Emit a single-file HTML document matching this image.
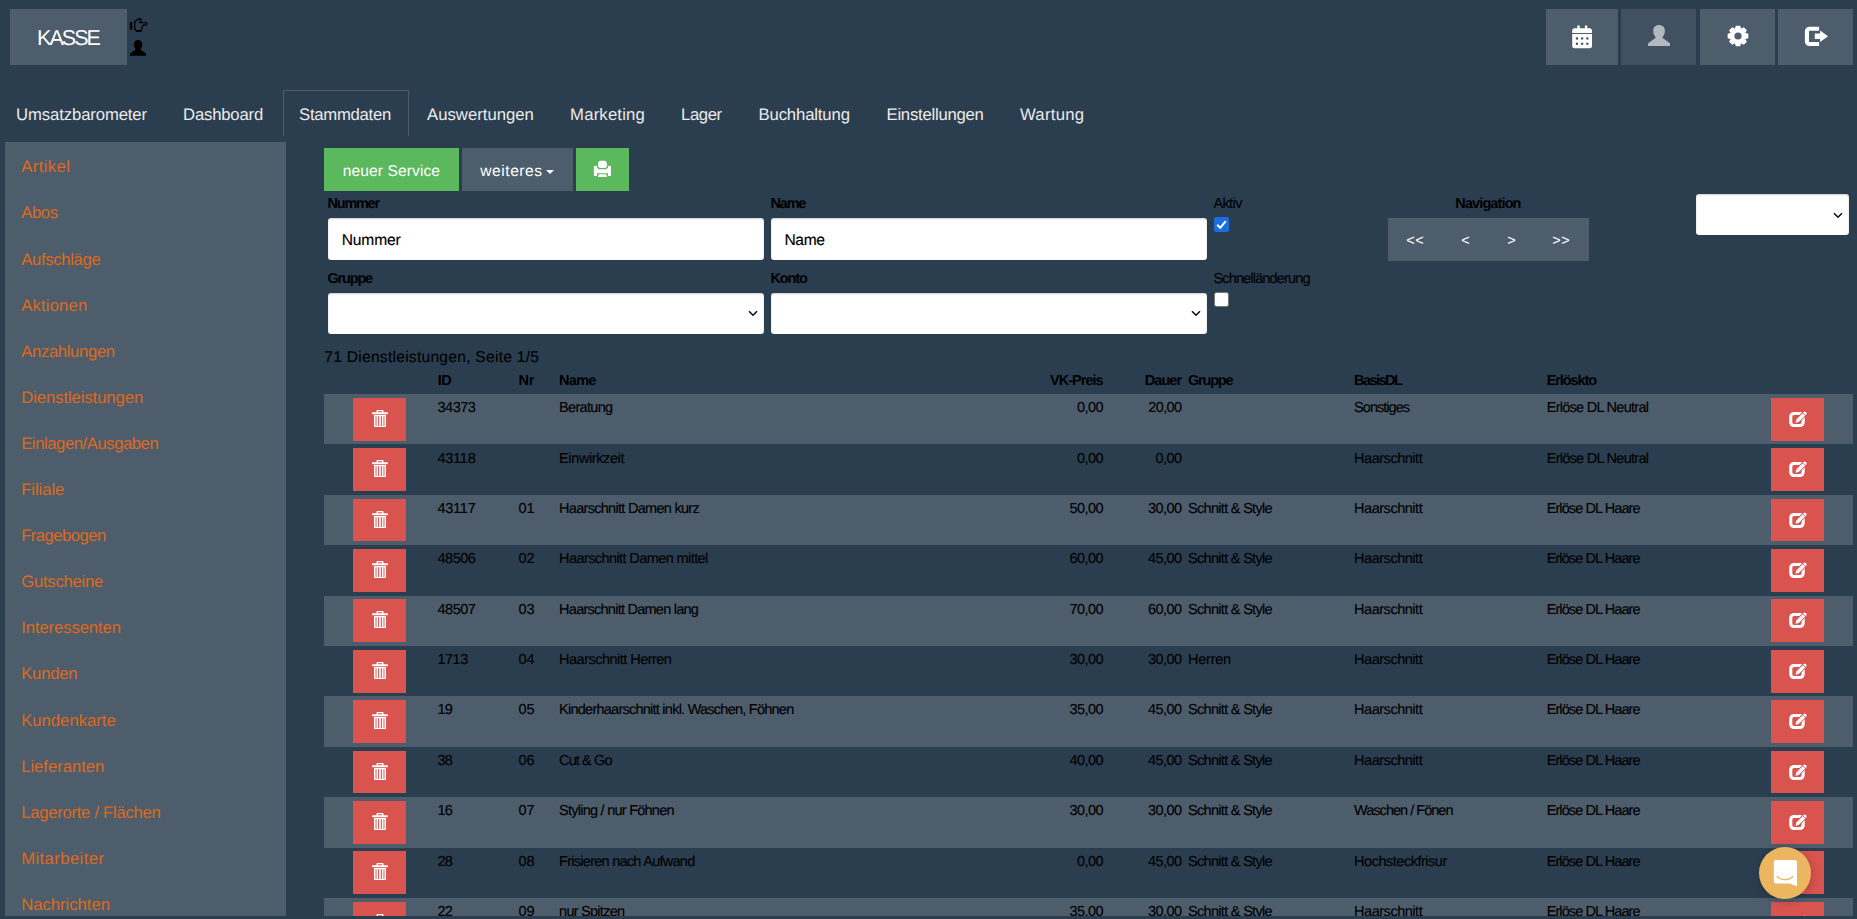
<!DOCTYPE html>
<html lang="de"><head><meta charset="utf-8"><title>Stammdaten - Dienstleistungen</title>
<style>
html,body{margin:0;padding:0}
body{width:1857px;height:919px;overflow:hidden;background:#2b3e50;font-family:'Liberation Sans',sans-serif;color:#000;position:relative;text-rendering:geometricPrecision}
.t{position:absolute;white-space:pre;display:block}
.k{-webkit-text-stroke:.15px}
.abs{position:absolute}
.btn{position:absolute;box-sizing:border-box}
.kasse{left:10px;top:9px;width:117px;height:56px;background:#4e5d6c}
.tb{top:9px;height:56px;background:#4e5d6c}
.tb svg{position:absolute}
.tab{position:absolute;top:90px;height:46px;box-sizing:border-box;border:1px solid transparent;border-bottom:0}
.tab.active{border-color:#4e5d6c}
.sidebar{position:absolute;left:5px;top:142px;width:281px;height:774px;background:#4e5d6c}
.row{position:absolute;left:324px;width:1529px;height:50.4px}
.row.odd{background:#4e5d6c}
.del,.edt{position:absolute;top:3.8px;height:42.86px;width:53px;background:#d9534f}
.del{left:29px}.edt{left:1447px}
.del svg{position:absolute;left:19px;top:12px}.edt svg{position:absolute;left:0;top:0}
.inp{position:absolute;box-sizing:border-box;background:#fff;border:0;border-radius:3px;box-shadow:inset 0 1px 2px rgba(0,0,0,.2)}
.chev{position:absolute}
.green{background:#5cb85c}.grey{background:#4e5d6c}
.foot{position:absolute;left:0;top:916px;width:1857px;height:4px;background:#2b3e50;z-index:5}
</style></head><body>
<div class="btn kasse"></div><svg class="abs" style="left:129px;top:17px" width="19" height="16" viewBox="129 17 19 16"><path fill="#000" d="M129.800 22h2.500v7.700h-2.500z"/><path fill="#000" d="M136.300 30.200h5.100l-.5 1.700h-4.100z"/><path fill="none" stroke="#000" stroke-width="1.350" stroke-linejoin="round" d="M134.700 29V21.600L139.600 18.300L141.300 20.200L139.300 22.600H145.600A1.250 1.250 0 0 1 145.600 25.100H142.900L140.900 31.200H136.800Z"/></svg><svg class="abs" style="left:129.900px;top:40px" width="16.100" height="15.800" viewBox="0 0 22 21" preserveAspectRatio="none"><path fill="#000" d="M11 0C14.500 0 16.800 2.300 16.800 5.600C16.800 8.500 15.800 10.500 14.600 11.600V13L21.300 17.500C22 18.100 22 19 22 21H0C0 19 0 18.100.7 17.500L7.400 13V11.600C6.200 10.500 5.200 8.500 5.200 5.600C5.200 2.300 7.500 0 11 0Z"/></svg><div class="btn tb" style="left:1546px;width:72px;background:#4e5d6c"><svg style="left:0;top:0" width="72" height="56" viewBox="1546 9 72 56"><path fill="#fff" d="M1577.300 25.600h2.400v2.600h5.200v-2.600h2.400v2.600h2.200a2.500 2.500 0 0 1 2.500 2.500v2.400h-19.800v-2.400a2.500 2.500 0 0 1 2.500-2.500h2.600zM1572.200 34.100h19.800v11.600a2.500 2.500 0 0 1-2.500 2.500h-14.800a2.500 2.500 0 0 1-2.500-2.500z"/><g fill="#3b4a63"><rect x="1575.900" y="37.400" width="2.100" height="2.100"/><rect x="1581.100" y="37.400" width="2.100" height="2.100"/><rect x="1586.300" y="37.400" width="2.100" height="2.100"/><rect x="1575.900" y="42.700" width="2.100" height="2.100"/><rect x="1581.100" y="42.700" width="2.100" height="2.100"/><rect x="1586.300" y="42.700" width="2.100" height="2.100"/></g></svg></div>
<div class="btn tb" style="left:1621px;width:75px;background:#425162"><svg style="left:26.900px;top:15.800px" width="22.100" height="21.200" viewBox="0 0 22 21" preserveAspectRatio="none"><path fill="#b3b9c0" d="M11 0C14.500 0 16.800 2.300 16.800 5.600C16.800 8.500 15.800 10.500 14.600 11.600V13L21.300 17.500C22 18.100 22 19 22 21H0C0 19 0 18.100.7 17.500L7.400 13V11.600C6.200 10.500 5.200 8.500 5.200 5.600C5.200 2.300 7.500 0 11 0Z"/></svg></div>
<div class="btn tb" style="left:1700px;width:75px;background:#4e5d6c"><svg style="left:26.700px;top:15.900px" width="22" height="22" viewBox="-11 -11 22 22"><g fill="#fff"><circle r="7.600"/><path d="M-3.200 -7L-2.200 -10.350H2.200L3.200 -7Z" transform="rotate(0)"/><path d="M-3.200 -7L-2.200 -10.350H2.200L3.200 -7Z" transform="rotate(45)"/><path d="M-3.200 -7L-2.200 -10.350H2.200L3.200 -7Z" transform="rotate(90)"/><path d="M-3.200 -7L-2.200 -10.350H2.200L3.200 -7Z" transform="rotate(135)"/><path d="M-3.200 -7L-2.200 -10.350H2.200L3.200 -7Z" transform="rotate(180)"/><path d="M-3.200 -7L-2.200 -10.350H2.200L3.200 -7Z" transform="rotate(225)"/><path d="M-3.200 -7L-2.200 -10.350H2.200L3.200 -7Z" transform="rotate(270)"/><path d="M-3.200 -7L-2.200 -10.350H2.200L3.200 -7Z" transform="rotate(315)"/></g><circle r="3.600" fill="#4e5d6c"/></svg></div>
<div class="btn tb" style="left:1778px;width:75px;background:#4e5d6c"><svg style="left:0;top:0" width="75" height="56" viewBox="0 0 75 56"><path fill="#fff" d="M41.100 17.700H31.400a4.500 4.500 0 0 0-4.500 4.500V32.600a4.500 4.500 0 0 0 4.500 4.500H41.100V33H31V21.800H41.100ZM36.800 24.500H42.100V21.500L50 27.300L42.100 33.100V30H36.800Z"/></svg></div>
<div class="tab" style="left:0px;width:165px"></div><div class="tab" style="left:167px;width:114px"></div><div class="tab active" style="left:283px;width:126px"></div><div class="tab" style="left:411px;width:141px"></div><div class="tab" style="left:554px;width:109px"></div><div class="tab" style="left:665px;width:75px"></div><div class="tab" style="left:742px;width:126px"></div><div class="tab" style="left:870px;width:132px"></div><div class="tab" style="left:1004px;width:97px"></div>
<div class="sidebar"></div>
<div class="btn green" style="left:324px;top:148px;width:135px;height:42.86px"></div><div class="btn grey" style="left:462px;top:148px;width:111px;height:42.86px"></div><div class="btn green" style="left:576px;top:148px;width:53px;height:43px"><svg class="abs" style="left:0;top:0" width="53" height="43" viewBox="0 0 53 43"><path fill="#fff" d="M17.900 17.900h17v10.100h-17z"/><path fill="#5cb85c" d="M21 17.500h11v2l-1.700 1.700h-7.600l-1.700-1.700zM21 25.300h11v3h-11z"/><path fill="#fff" d="M23.800 12.800h5.400l1.700 1.700v3.900l-1.700 1.700h-5.400l-1.700-1.700v-3.900zM22.900 26.200h7.200l1.100 2.900h-9.400z"/></svg></div><div class="abs" style="left:546.300px;top:169.800px;width:0;height:0;border-left:4px solid transparent;border-right:4px solid transparent;border-top:4.500px solid #fff"></div>
<div class="inp" style="left:328px;top:218px;width:436px;height:42px"></div><div class="inp" style="left:771px;top:218px;width:436px;height:42px"></div><div class="inp" style="left:328px;top:293px;width:436px;height:41px"></div><div class="inp" style="left:771px;top:293px;width:436px;height:41px"></div><div class="inp" style="left:1696px;top:194px;width:153px;height:41px"></div><svg class="chev" style="left:748px;top:310px" width="10" height="7" viewBox="0 0 10 7"><path fill="none" stroke="#111" stroke-width="1.600" d="M1 1.200l4 4 4-4"/></svg><svg class="chev" style="left:1191px;top:310px" width="10" height="7" viewBox="0 0 10 7"><path fill="none" stroke="#111" stroke-width="1.600" d="M1 1.200l4 4 4-4"/></svg><svg class="chev" style="left:1833px;top:212px" width="10" height="7" viewBox="0 0 10 7"><path fill="none" stroke="#111" stroke-width="1.600" d="M1 1.200l4 4 4-4"/></svg><div class="abs" style="left:1214px;top:217px;width:15px;height:15px;border-radius:2.500px;background:#1a6fe0"><svg width="15" height="15" viewBox="0 0 15 15"><path fill="none" stroke="#fff" stroke-width="2" d="M3.200 7.800l3 3 5.600-6.600"/></svg></div><div class="abs" style="left:1214px;top:292px;width:15px;height:15px;box-sizing:border-box;border-radius:2.500px;background:#fff;border:1px solid #767676"></div><div class="btn grey" style="left:1388px;top:218px;width:201px;height:43px"></div>
<div class="row odd" style="top:394.0px"><div class="del"><svg viewBox="0 0 16 17" width="16" height="17"><path fill="#fff" fill-rule="evenodd" d="M5.200 0h5.600a.7.700 0 0 1 .7.700V2.200h3.700a.8.800 0 0 1 .8.800v.5a.8.800 0 0 1-.8.800H.8A.8.800 0 0 1 0 3.500V3a.8.800 0 0 1 .8-.8h3.700V.7A.7.700 0 0 1 5.200 0zM5.900 1.200v1h4.200v-1z"/><path fill="#fff" d="M2 5.100h12v11.100a.8.800 0 0 1-.8.800H2.800a.8.800 0 0 1-.8-.8z"/><path fill="#d9534f" fill-opacity=".5" d="M3.100 6.200h2v9.700h-2zM10.900 6.200h2v9.700h-2z"/><path fill="#d9534f" fill-opacity=".12" d="M7 6.200h2v9.700H7z"/><path fill="#d9534f" d="M6.100 6.200h.95v9.700H6.100zM8.950 6.200h.95v9.700h-.95z"/></svg></div><div class="edt"><svg viewBox="0 0 53 43" width="53" height="43"><rect x="19.750" y="15.450" width="12.400" height="12.100" rx="3.200" fill="none" stroke="#fff" stroke-width="3.100"/><path fill="#fff" stroke="#d9534f" stroke-width="1.800" paint-order="stroke" stroke-linejoin="round" d="M24.500 24.700l.8-3.200 7.500-7.500a1.300 1.300 0 0 1 1.800 0l.6.600a1.300 1.300 0 0 1 0 1.800l-7.500 7.500z"/><path stroke="#d9534f" stroke-width=".9" d="M31.700 14.900l2.600 2.600"/></svg></div></div>
<div class="row" style="top:444.4px"><div class="del"><svg viewBox="0 0 16 17" width="16" height="17"><path fill="#fff" fill-rule="evenodd" d="M5.200 0h5.600a.7.700 0 0 1 .7.700V2.200h3.700a.8.800 0 0 1 .8.800v.5a.8.800 0 0 1-.8.800H.8A.8.800 0 0 1 0 3.500V3a.8.800 0 0 1 .8-.8h3.700V.7A.7.700 0 0 1 5.200 0zM5.900 1.200v1h4.200v-1z"/><path fill="#fff" d="M2 5.100h12v11.100a.8.800 0 0 1-.8.800H2.800a.8.800 0 0 1-.8-.8z"/><path fill="#d9534f" fill-opacity=".5" d="M3.100 6.200h2v9.700h-2zM10.900 6.200h2v9.700h-2z"/><path fill="#d9534f" fill-opacity=".12" d="M7 6.200h2v9.700H7z"/><path fill="#d9534f" d="M6.100 6.200h.95v9.700H6.100zM8.950 6.200h.95v9.700h-.95z"/></svg></div><div class="edt"><svg viewBox="0 0 53 43" width="53" height="43"><rect x="19.750" y="15.450" width="12.400" height="12.100" rx="3.200" fill="none" stroke="#fff" stroke-width="3.100"/><path fill="#fff" stroke="#d9534f" stroke-width="1.800" paint-order="stroke" stroke-linejoin="round" d="M24.500 24.700l.8-3.200 7.500-7.500a1.300 1.300 0 0 1 1.800 0l.6.600a1.300 1.300 0 0 1 0 1.800l-7.500 7.500z"/><path stroke="#d9534f" stroke-width=".9" d="M31.700 14.900l2.600 2.600"/></svg></div></div>
<div class="row odd" style="top:494.8px"><div class="del"><svg viewBox="0 0 16 17" width="16" height="17"><path fill="#fff" fill-rule="evenodd" d="M5.200 0h5.600a.7.700 0 0 1 .7.700V2.200h3.700a.8.800 0 0 1 .8.800v.5a.8.800 0 0 1-.8.800H.8A.8.800 0 0 1 0 3.500V3a.8.800 0 0 1 .8-.8h3.700V.7A.7.700 0 0 1 5.200 0zM5.900 1.200v1h4.200v-1z"/><path fill="#fff" d="M2 5.100h12v11.100a.8.800 0 0 1-.8.800H2.800a.8.800 0 0 1-.8-.8z"/><path fill="#d9534f" fill-opacity=".5" d="M3.100 6.200h2v9.700h-2zM10.900 6.200h2v9.700h-2z"/><path fill="#d9534f" fill-opacity=".12" d="M7 6.200h2v9.700H7z"/><path fill="#d9534f" d="M6.100 6.200h.95v9.700H6.100zM8.950 6.200h.95v9.700h-.95z"/></svg></div><div class="edt"><svg viewBox="0 0 53 43" width="53" height="43"><rect x="19.750" y="15.450" width="12.400" height="12.100" rx="3.200" fill="none" stroke="#fff" stroke-width="3.100"/><path fill="#fff" stroke="#d9534f" stroke-width="1.800" paint-order="stroke" stroke-linejoin="round" d="M24.500 24.700l.8-3.200 7.500-7.500a1.300 1.300 0 0 1 1.800 0l.6.600a1.300 1.300 0 0 1 0 1.800l-7.500 7.500z"/><path stroke="#d9534f" stroke-width=".9" d="M31.700 14.900l2.600 2.600"/></svg></div></div>
<div class="row" style="top:545.2px"><div class="del"><svg viewBox="0 0 16 17" width="16" height="17"><path fill="#fff" fill-rule="evenodd" d="M5.200 0h5.600a.7.700 0 0 1 .7.700V2.200h3.700a.8.800 0 0 1 .8.800v.5a.8.800 0 0 1-.8.800H.8A.8.800 0 0 1 0 3.500V3a.8.800 0 0 1 .8-.8h3.700V.7A.7.700 0 0 1 5.200 0zM5.900 1.200v1h4.200v-1z"/><path fill="#fff" d="M2 5.100h12v11.100a.8.800 0 0 1-.8.800H2.800a.8.800 0 0 1-.8-.8z"/><path fill="#d9534f" fill-opacity=".5" d="M3.100 6.200h2v9.700h-2zM10.900 6.200h2v9.700h-2z"/><path fill="#d9534f" fill-opacity=".12" d="M7 6.200h2v9.700H7z"/><path fill="#d9534f" d="M6.100 6.200h.95v9.700H6.100zM8.950 6.200h.95v9.700h-.95z"/></svg></div><div class="edt"><svg viewBox="0 0 53 43" width="53" height="43"><rect x="19.750" y="15.450" width="12.400" height="12.100" rx="3.200" fill="none" stroke="#fff" stroke-width="3.100"/><path fill="#fff" stroke="#d9534f" stroke-width="1.800" paint-order="stroke" stroke-linejoin="round" d="M24.500 24.700l.8-3.200 7.500-7.500a1.300 1.300 0 0 1 1.800 0l.6.600a1.300 1.300 0 0 1 0 1.800l-7.500 7.500z"/><path stroke="#d9534f" stroke-width=".9" d="M31.700 14.900l2.600 2.600"/></svg></div></div>
<div class="row odd" style="top:595.6px"><div class="del"><svg viewBox="0 0 16 17" width="16" height="17"><path fill="#fff" fill-rule="evenodd" d="M5.200 0h5.600a.7.700 0 0 1 .7.700V2.200h3.700a.8.800 0 0 1 .8.800v.5a.8.800 0 0 1-.8.800H.8A.8.800 0 0 1 0 3.500V3a.8.800 0 0 1 .8-.8h3.700V.7A.7.700 0 0 1 5.200 0zM5.900 1.200v1h4.200v-1z"/><path fill="#fff" d="M2 5.100h12v11.100a.8.800 0 0 1-.8.800H2.800a.8.800 0 0 1-.8-.8z"/><path fill="#d9534f" fill-opacity=".5" d="M3.100 6.200h2v9.700h-2zM10.900 6.200h2v9.700h-2z"/><path fill="#d9534f" fill-opacity=".12" d="M7 6.200h2v9.700H7z"/><path fill="#d9534f" d="M6.100 6.200h.95v9.700H6.100zM8.950 6.200h.95v9.700h-.95z"/></svg></div><div class="edt"><svg viewBox="0 0 53 43" width="53" height="43"><rect x="19.750" y="15.450" width="12.400" height="12.100" rx="3.200" fill="none" stroke="#fff" stroke-width="3.100"/><path fill="#fff" stroke="#d9534f" stroke-width="1.800" paint-order="stroke" stroke-linejoin="round" d="M24.500 24.700l.8-3.200 7.500-7.500a1.300 1.300 0 0 1 1.800 0l.6.600a1.300 1.300 0 0 1 0 1.800l-7.500 7.500z"/><path stroke="#d9534f" stroke-width=".9" d="M31.700 14.900l2.600 2.600"/></svg></div></div>
<div class="row" style="top:646.0px"><div class="del"><svg viewBox="0 0 16 17" width="16" height="17"><path fill="#fff" fill-rule="evenodd" d="M5.200 0h5.600a.7.700 0 0 1 .7.700V2.200h3.700a.8.800 0 0 1 .8.800v.5a.8.800 0 0 1-.8.800H.8A.8.800 0 0 1 0 3.500V3a.8.800 0 0 1 .8-.8h3.700V.7A.7.700 0 0 1 5.200 0zM5.900 1.200v1h4.200v-1z"/><path fill="#fff" d="M2 5.100h12v11.100a.8.800 0 0 1-.8.800H2.800a.8.800 0 0 1-.8-.8z"/><path fill="#d9534f" fill-opacity=".5" d="M3.100 6.200h2v9.700h-2zM10.900 6.200h2v9.700h-2z"/><path fill="#d9534f" fill-opacity=".12" d="M7 6.200h2v9.700H7z"/><path fill="#d9534f" d="M6.100 6.200h.95v9.700H6.100zM8.950 6.200h.95v9.700h-.95z"/></svg></div><div class="edt"><svg viewBox="0 0 53 43" width="53" height="43"><rect x="19.750" y="15.450" width="12.400" height="12.100" rx="3.200" fill="none" stroke="#fff" stroke-width="3.100"/><path fill="#fff" stroke="#d9534f" stroke-width="1.800" paint-order="stroke" stroke-linejoin="round" d="M24.500 24.700l.8-3.200 7.500-7.500a1.300 1.300 0 0 1 1.800 0l.6.600a1.300 1.300 0 0 1 0 1.800l-7.500 7.500z"/><path stroke="#d9534f" stroke-width=".9" d="M31.700 14.900l2.600 2.600"/></svg></div></div>
<div class="row odd" style="top:696.4px"><div class="del"><svg viewBox="0 0 16 17" width="16" height="17"><path fill="#fff" fill-rule="evenodd" d="M5.200 0h5.600a.7.700 0 0 1 .7.700V2.200h3.700a.8.800 0 0 1 .8.800v.5a.8.800 0 0 1-.8.800H.8A.8.800 0 0 1 0 3.500V3a.8.800 0 0 1 .8-.8h3.700V.7A.7.700 0 0 1 5.200 0zM5.900 1.200v1h4.200v-1z"/><path fill="#fff" d="M2 5.100h12v11.100a.8.800 0 0 1-.8.800H2.800a.8.800 0 0 1-.8-.8z"/><path fill="#d9534f" fill-opacity=".5" d="M3.100 6.200h2v9.700h-2zM10.900 6.200h2v9.700h-2z"/><path fill="#d9534f" fill-opacity=".12" d="M7 6.200h2v9.700H7z"/><path fill="#d9534f" d="M6.100 6.200h.95v9.700H6.100zM8.950 6.200h.95v9.700h-.95z"/></svg></div><div class="edt"><svg viewBox="0 0 53 43" width="53" height="43"><rect x="19.750" y="15.450" width="12.400" height="12.100" rx="3.200" fill="none" stroke="#fff" stroke-width="3.100"/><path fill="#fff" stroke="#d9534f" stroke-width="1.800" paint-order="stroke" stroke-linejoin="round" d="M24.500 24.700l.8-3.200 7.500-7.500a1.300 1.300 0 0 1 1.800 0l.6.600a1.300 1.300 0 0 1 0 1.800l-7.500 7.500z"/><path stroke="#d9534f" stroke-width=".9" d="M31.700 14.900l2.600 2.600"/></svg></div></div>
<div class="row" style="top:746.8px"><div class="del"><svg viewBox="0 0 16 17" width="16" height="17"><path fill="#fff" fill-rule="evenodd" d="M5.200 0h5.600a.7.700 0 0 1 .7.700V2.200h3.700a.8.800 0 0 1 .8.800v.5a.8.800 0 0 1-.8.800H.8A.8.800 0 0 1 0 3.500V3a.8.800 0 0 1 .8-.8h3.700V.7A.7.700 0 0 1 5.200 0zM5.900 1.200v1h4.200v-1z"/><path fill="#fff" d="M2 5.100h12v11.100a.8.800 0 0 1-.8.800H2.800a.8.800 0 0 1-.8-.8z"/><path fill="#d9534f" fill-opacity=".5" d="M3.100 6.200h2v9.700h-2zM10.900 6.200h2v9.700h-2z"/><path fill="#d9534f" fill-opacity=".12" d="M7 6.200h2v9.700H7z"/><path fill="#d9534f" d="M6.100 6.200h.95v9.700H6.100zM8.950 6.200h.95v9.700h-.95z"/></svg></div><div class="edt"><svg viewBox="0 0 53 43" width="53" height="43"><rect x="19.750" y="15.450" width="12.400" height="12.100" rx="3.200" fill="none" stroke="#fff" stroke-width="3.100"/><path fill="#fff" stroke="#d9534f" stroke-width="1.800" paint-order="stroke" stroke-linejoin="round" d="M24.500 24.700l.8-3.200 7.500-7.500a1.300 1.300 0 0 1 1.800 0l.6.600a1.300 1.300 0 0 1 0 1.800l-7.500 7.500z"/><path stroke="#d9534f" stroke-width=".9" d="M31.700 14.900l2.600 2.600"/></svg></div></div>
<div class="row odd" style="top:797.2px"><div class="del"><svg viewBox="0 0 16 17" width="16" height="17"><path fill="#fff" fill-rule="evenodd" d="M5.200 0h5.600a.7.700 0 0 1 .7.700V2.200h3.700a.8.800 0 0 1 .8.800v.5a.8.800 0 0 1-.8.800H.8A.8.800 0 0 1 0 3.500V3a.8.800 0 0 1 .8-.8h3.700V.7A.7.700 0 0 1 5.200 0zM5.900 1.200v1h4.200v-1z"/><path fill="#fff" d="M2 5.100h12v11.100a.8.800 0 0 1-.8.800H2.800a.8.800 0 0 1-.8-.8z"/><path fill="#d9534f" fill-opacity=".5" d="M3.100 6.200h2v9.700h-2zM10.900 6.200h2v9.700h-2z"/><path fill="#d9534f" fill-opacity=".12" d="M7 6.200h2v9.700H7z"/><path fill="#d9534f" d="M6.100 6.200h.95v9.700H6.100zM8.950 6.200h.95v9.700h-.95z"/></svg></div><div class="edt"><svg viewBox="0 0 53 43" width="53" height="43"><rect x="19.750" y="15.450" width="12.400" height="12.100" rx="3.200" fill="none" stroke="#fff" stroke-width="3.100"/><path fill="#fff" stroke="#d9534f" stroke-width="1.800" paint-order="stroke" stroke-linejoin="round" d="M24.500 24.700l.8-3.200 7.500-7.500a1.300 1.300 0 0 1 1.800 0l.6.600a1.300 1.300 0 0 1 0 1.800l-7.500 7.500z"/><path stroke="#d9534f" stroke-width=".9" d="M31.700 14.900l2.600 2.600"/></svg></div></div>
<div class="row" style="top:847.6px"><div class="del"><svg viewBox="0 0 16 17" width="16" height="17"><path fill="#fff" fill-rule="evenodd" d="M5.200 0h5.600a.7.700 0 0 1 .7.700V2.200h3.700a.8.800 0 0 1 .8.800v.5a.8.800 0 0 1-.8.800H.8A.8.800 0 0 1 0 3.500V3a.8.800 0 0 1 .8-.8h3.700V.7A.7.700 0 0 1 5.200 0zM5.900 1.200v1h4.200v-1z"/><path fill="#fff" d="M2 5.100h12v11.100a.8.800 0 0 1-.8.800H2.800a.8.800 0 0 1-.8-.8z"/><path fill="#d9534f" fill-opacity=".5" d="M3.100 6.200h2v9.700h-2zM10.900 6.200h2v9.700h-2z"/><path fill="#d9534f" fill-opacity=".12" d="M7 6.200h2v9.700H7z"/><path fill="#d9534f" d="M6.100 6.200h.95v9.700H6.100zM8.950 6.200h.95v9.700h-.95z"/></svg></div><div class="edt"><svg viewBox="0 0 53 43" width="53" height="43"><rect x="19.750" y="15.450" width="12.400" height="12.100" rx="3.200" fill="none" stroke="#fff" stroke-width="3.100"/><path fill="#fff" stroke="#d9534f" stroke-width="1.800" paint-order="stroke" stroke-linejoin="round" d="M24.500 24.700l.8-3.200 7.500-7.500a1.300 1.300 0 0 1 1.800 0l.6.600a1.300 1.300 0 0 1 0 1.800l-7.500 7.500z"/><path stroke="#d9534f" stroke-width=".9" d="M31.700 14.900l2.600 2.600"/></svg></div></div>
<div class="row odd" style="top:898.0px"><div class="del"><svg viewBox="0 0 16 17" width="16" height="17"><path fill="#fff" fill-rule="evenodd" d="M5.200 0h5.600a.7.700 0 0 1 .7.700V2.200h3.700a.8.800 0 0 1 .8.800v.5a.8.800 0 0 1-.8.800H.8A.8.800 0 0 1 0 3.500V3a.8.800 0 0 1 .8-.8h3.700V.7A.7.700 0 0 1 5.200 0zM5.900 1.200v1h4.200v-1z"/><path fill="#fff" d="M2 5.100h12v11.100a.8.800 0 0 1-.8.800H2.800a.8.800 0 0 1-.8-.8z"/><path fill="#d9534f" fill-opacity=".5" d="M3.100 6.200h2v9.700h-2zM10.900 6.200h2v9.700h-2z"/><path fill="#d9534f" fill-opacity=".12" d="M7 6.200h2v9.700H7z"/><path fill="#d9534f" d="M6.100 6.200h.95v9.700H6.100zM8.950 6.200h.95v9.700h-.95z"/></svg></div><div class="edt"><svg viewBox="0 0 53 43" width="53" height="43"><rect x="19.750" y="15.450" width="12.400" height="12.100" rx="3.200" fill="none" stroke="#fff" stroke-width="3.100"/><path fill="#fff" stroke="#d9534f" stroke-width="1.800" paint-order="stroke" stroke-linejoin="round" d="M24.500 24.700l.8-3.200 7.500-7.500a1.300 1.300 0 0 1 1.800 0l.6.600a1.300 1.300 0 0 1 0 1.800l-7.500 7.500z"/><path stroke="#d9534f" stroke-width=".9" d="M31.700 14.900l2.600 2.600"/></svg></div></div>
<div class="abs" style="left:1759px;top:847px;width:52px;height:52px;border-radius:50%;background:#ebb65f;box-shadow:0 2px 10px rgba(0,0,0,.22)"><svg class="abs" style="left:0;top:0" width="52" height="52" viewBox="1759 847 52 52"><path fill="#fff" d="M1776.300 859.900h18.200a2.500 2.500 0 0 1 2.500 2.500v23.800l-7.500-2.800h-13.200a2.500 2.500 0 0 1-2.500-2.500v-18.500a2.500 2.500 0 0 1 2.500-2.500z"/><path fill="none" stroke="#ebb65f" stroke-width="1.300" stroke-linecap="round" d="M1777.200 876.500c4 4.200 11.600 4.200 15.600 0"/></svg></div><div class="foot"></div>
<span class="t" style="top:25.00px;font-size:21.5px;line-height:26px;left:37.10px;letter-spacing:-1.961px;color:#fff;">KASSE</span>
<span class="t" style="top:104.30px;font-size:16.7px;line-height:21px;left:16.10px;letter-spacing:-0.115px;color:#ebebeb;">Umsatzbarometer</span>
<span class="t" style="top:104.30px;font-size:16.7px;line-height:21px;left:183.10px;letter-spacing:-0.193px;color:#ebebeb;">Dashboard</span>
<span class="t" style="top:104.30px;font-size:16.7px;line-height:21px;left:299.10px;letter-spacing:-0.271px;color:#ebebeb;">Stammdaten</span>
<span class="t" style="top:104.30px;font-size:16.7px;line-height:21px;left:427.10px;letter-spacing:0.001px;color:#ebebeb;">Auswertungen</span>
<span class="t" style="top:104.30px;font-size:16.7px;line-height:21px;left:570.10px;letter-spacing:0.180px;color:#ebebeb;">Marketing</span>
<span class="t" style="top:104.30px;font-size:16.7px;line-height:21px;left:681.10px;letter-spacing:-0.398px;color:#ebebeb;">Lager</span>
<span class="t" style="top:104.30px;font-size:16.7px;line-height:21px;left:758.50px;letter-spacing:-0.136px;color:#ebebeb;">Buchhaltung</span>
<span class="t" style="top:104.30px;font-size:16.7px;line-height:21px;left:886.50px;letter-spacing:-0.239px;color:#ebebeb;">Einstellungen</span>
<span class="t" style="top:104.30px;font-size:16.7px;line-height:21px;left:1019.90px;letter-spacing:0.292px;color:#ebebeb;">Wartung</span>
<span class="t sb" style="top:156.30px;font-size:16.7px;line-height:21px;left:21.20px;letter-spacing:0.404px;color:#df691a;">Artikel</span>
<span class="t sb" style="top:202.40px;font-size:16.7px;line-height:21px;left:21.20px;letter-spacing:-0.362px;color:#df691a;">Abos</span>
<span class="t sb" style="top:248.50px;font-size:16.7px;line-height:21px;left:21.20px;letter-spacing:-0.338px;color:#df691a;">Aufschläge</span>
<span class="t sb" style="top:294.60px;font-size:16.7px;line-height:21px;left:21.20px;letter-spacing:0.156px;color:#df691a;">Aktionen</span>
<span class="t sb" style="top:340.70px;font-size:16.7px;line-height:21px;left:21.20px;letter-spacing:-0.349px;color:#df691a;">Anzahlungen</span>
<span class="t sb" style="top:386.80px;font-size:16.7px;line-height:21px;left:21.20px;letter-spacing:-0.093px;color:#df691a;">Dienstleistungen</span>
<span class="t sb" style="top:432.90px;font-size:16.7px;line-height:21px;left:21.20px;letter-spacing:-0.450px;color:#df691a;">Einlagen/Ausgaben</span>
<span class="t sb" style="top:479.00px;font-size:16.7px;line-height:21px;left:21.20px;letter-spacing:-0.071px;color:#df691a;">Filiale</span>
<span class="t sb" style="top:525.10px;font-size:16.7px;line-height:21px;left:21.20px;letter-spacing:-0.550px;color:#df691a;">Fragebogen</span>
<span class="t sb" style="top:571.20px;font-size:16.7px;line-height:21px;left:21.20px;letter-spacing:-0.252px;color:#df691a;">Gutscheine</span>
<span class="t sb" style="top:617.30px;font-size:16.7px;line-height:21px;left:21.20px;letter-spacing:-0.110px;color:#df691a;">Interessenten</span>
<span class="t sb" style="top:663.40px;font-size:16.7px;line-height:21px;left:21.20px;letter-spacing:-0.224px;color:#df691a;">Kunden</span>
<span class="t sb" style="top:709.50px;font-size:16.7px;line-height:21px;left:21.20px;letter-spacing:-0.013px;color:#df691a;">Kundenkarte</span>
<span class="t sb" style="top:755.60px;font-size:16.7px;line-height:21px;left:21.20px;letter-spacing:-0.029px;color:#df691a;">Lieferanten</span>
<span class="t sb" style="top:801.70px;font-size:16.7px;line-height:21px;left:21.20px;letter-spacing:-0.285px;color:#df691a;">Lagerorte / Flächen</span>
<span class="t sb" style="top:847.80px;font-size:16.7px;line-height:21px;left:21.20px;letter-spacing:0.397px;color:#df691a;">Mitarbeiter</span>
<span class="t sb" style="top:893.90px;font-size:16.7px;line-height:21px;left:21.20px;letter-spacing:-0.022px;color:#df691a;">Nachrichten</span>
<span class="t" style="top:161.80px;font-size:15.6px;line-height:19px;left:342.70px;letter-spacing:0.091px;color:#fff;">neuer Service</span>
<span class="t" style="top:161.80px;font-size:15.6px;line-height:19px;left:480.30px;letter-spacing:0.528px;color:#fff;">weiteres</span>
<span class="t" style="top:195.00px;font-size:14.5px;line-height:18px;left:327.60px;letter-spacing:-1.271px;font-weight:700;">Nummer</span>
<span class="t" style="top:195.00px;font-size:14.5px;line-height:18px;left:770.40px;letter-spacing:-1.150px;font-weight:700;">Name</span>
<span class="t" style="top:270.00px;font-size:14.5px;line-height:18px;left:327.40px;letter-spacing:-1.160px;font-weight:700;">Gruppe</span>
<span class="t" style="top:270.00px;font-size:14.5px;line-height:18px;left:770.40px;letter-spacing:-1.115px;font-weight:700;">Konto</span>
<span class="t k" style="top:195.00px;font-size:14.5px;line-height:18px;left:1213.40px;letter-spacing:-0.604px;">Aktiv</span>
<span class="t k" style="top:270.00px;font-size:14.5px;line-height:18px;left:1213.40px;letter-spacing:-0.830px;">Schnelländerung</span>
<span class="t" style="top:195.00px;font-size:14.5px;line-height:18px;left:1455.30px;letter-spacing:-0.882px;font-weight:700;">Navigation</span>
<span class="t k" style="top:230.90px;font-size:15.6px;line-height:19px;left:341.70px;letter-spacing:-0.130px;">Nummer</span>
<span class="t k" style="top:230.90px;font-size:15.6px;line-height:19px;left:784.40px;letter-spacing:-0.327px;">Name</span>
<span class="t" style="top:232.00px;font-size:14.5px;line-height:18px;left:1406.30px;letter-spacing:0.481px;color:#fff;">&lt;&lt;</span>
<span class="t" style="top:232.00px;font-size:14.5px;line-height:18px;left:1461.30px;color:#fff;">&lt;</span>
<span class="t" style="top:232.00px;font-size:14.5px;line-height:18px;left:1507.30px;color:#fff;">&gt;</span>
<span class="t" style="top:232.00px;font-size:14.5px;line-height:18px;left:1552.30px;letter-spacing:0.481px;color:#fff;">&gt;&gt;</span>
<span class="t k" style="top:348.00px;font-size:15.6px;line-height:19px;left:324.30px;letter-spacing:0.257px;">71 Dienstleistungen, Seite 1/5</span>
<span class="t" style="top:372.00px;font-size:14.5px;line-height:18px;left:437.80px;letter-spacing:-0.550px;font-weight:700;">ID</span>
<span class="t" style="top:372.00px;font-size:14.5px;line-height:18px;left:518.60px;letter-spacing:-0.362px;font-weight:700;">Nr</span>
<span class="t" style="top:372.00px;font-size:14.5px;line-height:18px;left:558.90px;letter-spacing:-0.650px;font-weight:700;">Name</span>
<span class="t" style="top:372.00px;font-size:14.5px;line-height:18px;left:1188.00px;letter-spacing:-1.210px;font-weight:700;">Gruppe</span>
<span class="t" style="top:372.00px;font-size:14.5px;line-height:18px;left:1354.10px;letter-spacing:-1.562px;font-weight:700;">BasisDL</span>
<span class="t" style="top:372.00px;font-size:14.5px;line-height:18px;left:1546.70px;letter-spacing:-1.102px;font-weight:700;">Erlöskto</span>
<span class="t" style="top:372.00px;font-size:14.5px;line-height:18px;right:754.38px;letter-spacing:-0.982px;font-weight:700;">VK-Preis</span>
<span class="t" style="top:372.00px;font-size:14.5px;line-height:18px;right:675.84px;letter-spacing:-0.942px;font-weight:700;">Dauer</span>
<span class="t k" style="top:399.00px;font-size:14.5px;line-height:18px;left:437.40px;letter-spacing:-0.446px;">34373</span>
<span class="t k" style="top:399.00px;font-size:14.5px;line-height:18px;left:559.10px;letter-spacing:-0.682px;">Beratung</span>
<span class="t k" style="top:399.00px;font-size:14.5px;line-height:18px;right:753.93px;letter-spacing:-0.534px;">0,00</span>
<span class="t k" style="top:399.00px;font-size:14.5px;line-height:18px;right:675.50px;letter-spacing:-0.599px;">20,00</span>
<span class="t k" style="top:399.00px;font-size:14.5px;line-height:18px;left:1354.10px;letter-spacing:-0.965px;">Sonstiges</span>
<span class="t k" style="top:399.00px;font-size:14.5px;line-height:18px;left:1546.70px;letter-spacing:-0.724px;">Erlöse DL Neutral</span>
<span class="t k" style="top:450.00px;font-size:14.5px;line-height:18px;left:437.40px;letter-spacing:-0.230px;">43118</span>
<span class="t k" style="top:450.00px;font-size:14.5px;line-height:18px;left:559.10px;letter-spacing:-0.391px;">Einwirkzeit</span>
<span class="t k" style="top:450.00px;font-size:14.5px;line-height:18px;right:753.93px;letter-spacing:-0.534px;">0,00</span>
<span class="t k" style="top:450.00px;font-size:14.5px;line-height:18px;right:675.43px;letter-spacing:-0.534px;">0,00</span>
<span class="t k" style="top:450.00px;font-size:14.5px;line-height:18px;left:1354.10px;letter-spacing:-0.477px;">Haarschnitt</span>
<span class="t k" style="top:450.00px;font-size:14.5px;line-height:18px;left:1546.70px;letter-spacing:-0.724px;">Erlöse DL Neutral</span>
<span class="t k" style="top:500.00px;font-size:14.5px;line-height:18px;left:437.40px;letter-spacing:-0.230px;">43117</span>
<span class="t k" style="top:500.00px;font-size:14.5px;line-height:18px;left:518.60px;letter-spacing:-0.120px;">01</span>
<span class="t k" style="top:500.00px;font-size:14.5px;line-height:18px;left:559.10px;letter-spacing:-0.711px;">Haarschnitt Damen kurz</span>
<span class="t k" style="top:500.00px;font-size:14.5px;line-height:18px;right:753.92px;letter-spacing:-0.519px;">50,00</span>
<span class="t k" style="top:500.00px;font-size:14.5px;line-height:18px;right:675.42px;letter-spacing:-0.519px;">30,00</span>
<span class="t k" style="top:500.00px;font-size:14.5px;line-height:18px;left:1188.00px;letter-spacing:-0.693px;">Schnitt &amp; Style</span>
<span class="t k" style="top:500.00px;font-size:14.5px;line-height:18px;left:1354.10px;letter-spacing:-0.477px;">Haarschnitt</span>
<span class="t k" style="top:500.00px;font-size:14.5px;line-height:18px;left:1546.70px;letter-spacing:-0.910px;">Erlöse DL Haare</span>
<span class="t k" style="top:550.00px;font-size:14.5px;line-height:18px;left:437.40px;letter-spacing:-0.446px;">48506</span>
<span class="t k" style="top:550.00px;font-size:14.5px;line-height:18px;left:518.60px;letter-spacing:-0.120px;">02</span>
<span class="t k" style="top:550.00px;font-size:14.5px;line-height:18px;left:559.10px;letter-spacing:-0.591px;">Haarschnitt Damen mittel</span>
<span class="t k" style="top:550.00px;font-size:14.5px;line-height:18px;right:753.92px;letter-spacing:-0.519px;">60,00</span>
<span class="t k" style="top:550.00px;font-size:14.5px;line-height:18px;right:675.42px;letter-spacing:-0.519px;">45,00</span>
<span class="t k" style="top:550.00px;font-size:14.5px;line-height:18px;left:1188.00px;letter-spacing:-0.693px;">Schnitt &amp; Style</span>
<span class="t k" style="top:550.00px;font-size:14.5px;line-height:18px;left:1354.10px;letter-spacing:-0.477px;">Haarschnitt</span>
<span class="t k" style="top:550.00px;font-size:14.5px;line-height:18px;left:1546.70px;letter-spacing:-0.910px;">Erlöse DL Haare</span>
<span class="t k" style="top:601.00px;font-size:14.5px;line-height:18px;left:437.40px;letter-spacing:-0.446px;">48507</span>
<span class="t k" style="top:601.00px;font-size:14.5px;line-height:18px;left:518.60px;letter-spacing:-0.120px;">03</span>
<span class="t k" style="top:601.00px;font-size:14.5px;line-height:18px;left:559.10px;letter-spacing:-0.748px;">Haarschnitt Damen lang</span>
<span class="t k" style="top:601.00px;font-size:14.5px;line-height:18px;right:753.92px;letter-spacing:-0.519px;">70,00</span>
<span class="t k" style="top:601.00px;font-size:14.5px;line-height:18px;right:675.42px;letter-spacing:-0.519px;">60,00</span>
<span class="t k" style="top:601.00px;font-size:14.5px;line-height:18px;left:1188.00px;letter-spacing:-0.693px;">Schnitt &amp; Style</span>
<span class="t k" style="top:601.00px;font-size:14.5px;line-height:18px;left:1354.10px;letter-spacing:-0.477px;">Haarschnitt</span>
<span class="t k" style="top:601.00px;font-size:14.5px;line-height:18px;left:1546.70px;letter-spacing:-0.910px;">Erlöse DL Haare</span>
<span class="t k" style="top:651.00px;font-size:14.5px;line-height:18px;left:437.40px;letter-spacing:-0.466px;">1713</span>
<span class="t k" style="top:651.00px;font-size:14.5px;line-height:18px;left:518.60px;letter-spacing:-0.070px;">04</span>
<span class="t k" style="top:651.00px;font-size:14.5px;line-height:18px;left:559.10px;letter-spacing:-0.522px;">Haarschnitt Herren</span>
<span class="t k" style="top:651.00px;font-size:14.5px;line-height:18px;right:753.92px;letter-spacing:-0.519px;">30,00</span>
<span class="t k" style="top:651.00px;font-size:14.5px;line-height:18px;right:675.42px;letter-spacing:-0.519px;">30,00</span>
<span class="t k" style="top:651.00px;font-size:14.5px;line-height:18px;left:1188.00px;letter-spacing:-0.238px;">Herren</span>
<span class="t k" style="top:651.00px;font-size:14.5px;line-height:18px;left:1354.10px;letter-spacing:-0.477px;">Haarschnitt</span>
<span class="t k" style="top:651.00px;font-size:14.5px;line-height:18px;left:1546.70px;letter-spacing:-0.910px;">Erlöse DL Haare</span>
<span class="t k" style="top:701.00px;font-size:14.5px;line-height:18px;left:437.40px;letter-spacing:-0.770px;">19</span>
<span class="t k" style="top:701.00px;font-size:14.5px;line-height:18px;left:518.60px;letter-spacing:-0.120px;">05</span>
<span class="t k" style="top:701.00px;font-size:14.5px;line-height:18px;left:559.10px;letter-spacing:-0.755px;">Kinderhaarschnitt inkl. Waschen, Föhnen</span>
<span class="t k" style="top:701.00px;font-size:14.5px;line-height:18px;right:753.92px;letter-spacing:-0.519px;">35,00</span>
<span class="t k" style="top:701.00px;font-size:14.5px;line-height:18px;right:675.42px;letter-spacing:-0.519px;">45,00</span>
<span class="t k" style="top:701.00px;font-size:14.5px;line-height:18px;left:1188.00px;letter-spacing:-0.693px;">Schnitt &amp; Style</span>
<span class="t k" style="top:701.00px;font-size:14.5px;line-height:18px;left:1354.10px;letter-spacing:-0.477px;">Haarschnitt</span>
<span class="t k" style="top:701.00px;font-size:14.5px;line-height:18px;left:1546.70px;letter-spacing:-0.910px;">Erlöse DL Haare</span>
<span class="t k" style="top:752.00px;font-size:14.5px;line-height:18px;left:437.40px;letter-spacing:-0.670px;">38</span>
<span class="t k" style="top:752.00px;font-size:14.5px;line-height:18px;left:518.60px;letter-spacing:-0.120px;">06</span>
<span class="t k" style="top:752.00px;font-size:14.5px;line-height:18px;left:559.10px;letter-spacing:-0.893px;">Cut &amp; Go</span>
<span class="t k" style="top:752.00px;font-size:14.5px;line-height:18px;right:753.92px;letter-spacing:-0.519px;">40,00</span>
<span class="t k" style="top:752.00px;font-size:14.5px;line-height:18px;right:675.42px;letter-spacing:-0.519px;">45,00</span>
<span class="t k" style="top:752.00px;font-size:14.5px;line-height:18px;left:1188.00px;letter-spacing:-0.693px;">Schnitt &amp; Style</span>
<span class="t k" style="top:752.00px;font-size:14.5px;line-height:18px;left:1354.10px;letter-spacing:-0.477px;">Haarschnitt</span>
<span class="t k" style="top:752.00px;font-size:14.5px;line-height:18px;left:1546.70px;letter-spacing:-0.910px;">Erlöse DL Haare</span>
<span class="t k" style="top:802.00px;font-size:14.5px;line-height:18px;left:437.40px;letter-spacing:-0.770px;">16</span>
<span class="t k" style="top:802.00px;font-size:14.5px;line-height:18px;left:518.60px;letter-spacing:-0.120px;">07</span>
<span class="t k" style="top:802.00px;font-size:14.5px;line-height:18px;left:559.10px;letter-spacing:-0.754px;">Styling / nur Föhnen</span>
<span class="t k" style="top:802.00px;font-size:14.5px;line-height:18px;right:753.92px;letter-spacing:-0.519px;">30,00</span>
<span class="t k" style="top:802.00px;font-size:14.5px;line-height:18px;right:675.42px;letter-spacing:-0.519px;">30,00</span>
<span class="t k" style="top:802.00px;font-size:14.5px;line-height:18px;left:1188.00px;letter-spacing:-0.693px;">Schnitt &amp; Style</span>
<span class="t k" style="top:802.00px;font-size:14.5px;line-height:18px;left:1354.10px;letter-spacing:-0.981px;">Waschen / Fönen</span>
<span class="t k" style="top:802.00px;font-size:14.5px;line-height:18px;left:1546.70px;letter-spacing:-0.910px;">Erlöse DL Haare</span>
<span class="t k" style="top:853.00px;font-size:14.5px;line-height:18px;left:437.40px;letter-spacing:-0.670px;">28</span>
<span class="t k" style="top:853.00px;font-size:14.5px;line-height:18px;left:518.60px;letter-spacing:-0.120px;">08</span>
<span class="t k" style="top:853.00px;font-size:14.5px;line-height:18px;left:559.10px;letter-spacing:-0.733px;">Frisieren nach Aufwand</span>
<span class="t k" style="top:853.00px;font-size:14.5px;line-height:18px;right:753.93px;letter-spacing:-0.534px;">0,00</span>
<span class="t k" style="top:853.00px;font-size:14.5px;line-height:18px;right:675.42px;letter-spacing:-0.519px;">45,00</span>
<span class="t k" style="top:853.00px;font-size:14.5px;line-height:18px;left:1188.00px;letter-spacing:-0.693px;">Schnitt &amp; Style</span>
<span class="t k" style="top:853.00px;font-size:14.5px;line-height:18px;left:1354.10px;letter-spacing:-0.481px;">Hochsteckfrisur</span>
<span class="t k" style="top:853.00px;font-size:14.5px;line-height:18px;left:1546.70px;letter-spacing:-0.910px;">Erlöse DL Haare</span>
<span class="t k" style="top:903.00px;font-size:14.5px;line-height:18px;left:437.40px;letter-spacing:-0.670px;">22</span>
<span class="t k" style="top:903.00px;font-size:14.5px;line-height:18px;left:518.60px;letter-spacing:-0.120px;">09</span>
<span class="t k" style="top:903.00px;font-size:14.5px;line-height:18px;left:559.10px;letter-spacing:-0.742px;">nur Spitzen</span>
<span class="t k" style="top:903.00px;font-size:14.5px;line-height:18px;right:753.92px;letter-spacing:-0.519px;">35,00</span>
<span class="t k" style="top:903.00px;font-size:14.5px;line-height:18px;right:675.42px;letter-spacing:-0.519px;">30,00</span>
<span class="t k" style="top:903.00px;font-size:14.5px;line-height:18px;left:1188.00px;letter-spacing:-0.693px;">Schnitt &amp; Style</span>
<span class="t k" style="top:903.00px;font-size:14.5px;line-height:18px;left:1354.10px;letter-spacing:-0.477px;">Haarschnitt</span>
<span class="t k" style="top:903.00px;font-size:14.5px;line-height:18px;left:1546.70px;letter-spacing:-0.910px;">Erlöse DL Haare</span>
</body></html>
